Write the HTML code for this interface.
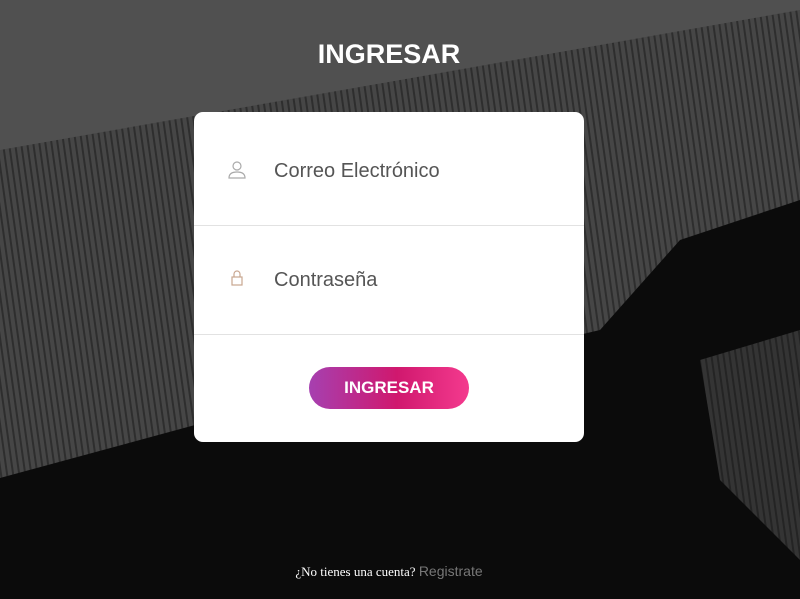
<!DOCTYPE html>
<html><head><meta charset="utf-8"><style>
html,body{margin:0;width:800px;height:599px;overflow:hidden;background:#0b0b0b;font-family:"Liberation Sans",sans-serif}
.bg{position:absolute;inset:0}
.card{position:absolute;left:194px;top:112px;width:390px;height:330px;background:#fff;border-radius:9px}
.row{position:absolute;left:0;width:390px;border-bottom:1px solid #e2e2e2}
.lbl{position:absolute;left:80px;font-size:20px;color:#555}
h1{position:absolute;top:39px;left:194px;width:390px;text-align:center;margin:0;color:#fff;font-size:27px;font-weight:bold}
.btn{position:absolute;left:115px;top:255px;width:160px;height:42px;border-radius:21px;background:linear-gradient(90deg,#a640b0,#d0186e 55%,#f43a8e);color:#fff;font-weight:bold;font-size:17px;text-align:center;line-height:42px}
.foot{position:absolute;top:563px;left:194px;width:390px;text-align:center;font-size:13px;color:#fff;font-family:"Liberation Serif",serif}
.foot span{color:#777;font-family:"Liberation Sans",sans-serif;font-size:14px}
</style></head><body>
<svg class="bg" width="800" height="599">
<defs><pattern id="s" width="6" height="6" patternUnits="userSpaceOnUse" patternTransform="rotate(-8)"><rect width="6" height="6" fill="#464646"/><rect width="2" height="6" fill="#2e2e2e"/></pattern></defs>
<polygon points="0,0 800,0 800,200 680,240 600,330 195,425 0,478" fill="url(#s)"/>
<polygon points="0,0 800,0 800,10 0,150" fill="#505050"/>
<polygon points="700,360 800,330 800,560 720,480" fill="url(#s)" opacity=".7"/>
</svg>
<h1>INGRESAR</h1>
<div class="card">
<div class="row" style="top:0;height:113px"></div>
<div class="row" style="top:113px;height:109px"></div>
<svg style="position:absolute;left:34px;top:49px" width="18" height="18" viewBox="0 0 18 18" fill="none" stroke="#aaa" stroke-width="1.2"><circle cx="9" cy="5" r="4"/><path d="M1 17c0-4 3-6 8-6s8 2 8 6z"/></svg>
<div class="lbl" style="top:48px">Correo Electrónico</div>
<svg style="position:absolute;left:37px;top:158px" width="12" height="16" viewBox="0 0 12 16" fill="none" stroke="#c8a690" stroke-width="1.2"><path d="M3 7V4a3 3 0 0 1 6 0v3"/><rect x="1" y="7" width="10" height="8"/></svg>
<div class="lbl" style="top:157px">Contraseña</div>
<div class="btn">INGRESAR</div>
</div>
<div class="foot">¿No tienes una cuenta? <span>Registrate</span></div>
</body></html>
